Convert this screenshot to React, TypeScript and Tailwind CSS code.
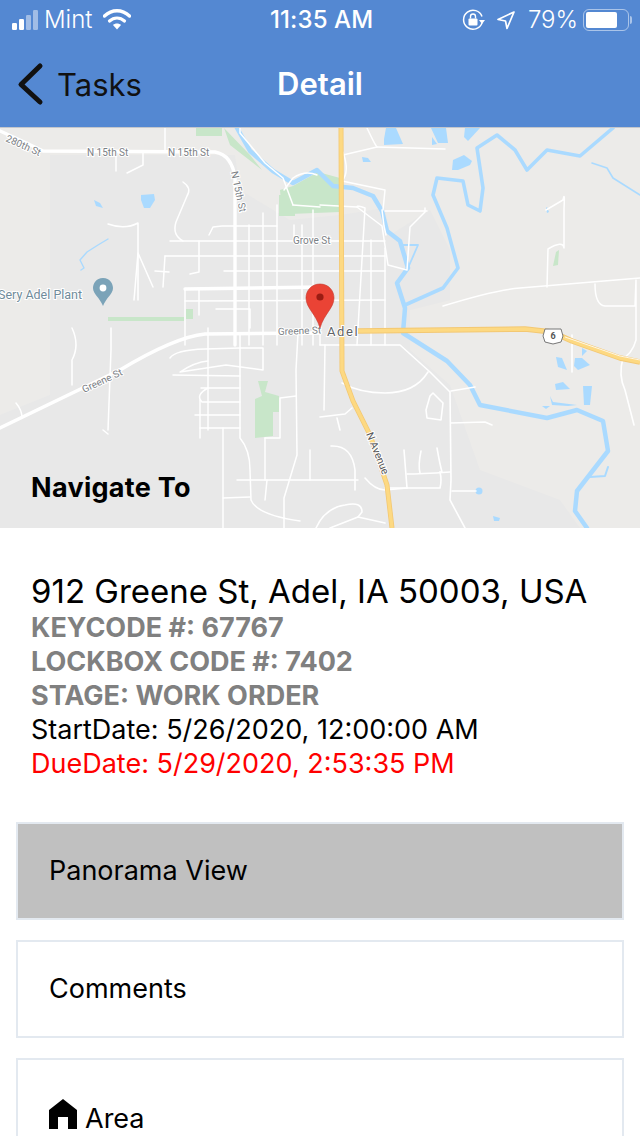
import React from "react";

const white = "#ffffff";
const water = "#aadaff";
const yellow = "#fdd982";
const green = "#c8e6c9";

function Roads() {
  const thick = [
    "M0 131 L22 141 L43 151 L215 152 Q232 155 235 178 L235 345",
    "M0 428 L120 370 Q175 337 205 334 L320 333",
    "M185 289 L320 287",
  ];
  const thin = [
    "M165 128 L165 152", "M116 152 L116 171", "M143 152 L143 165 L127 173",
    "M183 182 Q192 188 187 196 L176 222 Q172 235 183 241",
    "M108 224 Q125 230 138 223 L138 300", "M134 300 L138 253 L153 287",
    "M170 241 L385 241", "M199 241 L199 272 L190 274", "M165 256 L385 256", "M163 287 L165 256",
    "M155 271 L169 272", "M224 271 L385 271", "M185 301 L385 300", "M185 289 L185 345", "M199 289 L199 315", "M216 309 L250 309 L250 328",
    "M249 225 L249 345", "M263 213 L263 345", "M277 205 L277 345", "M302 225 L302 345", "M313 210 L313 345",
    "M357 207 Q357 205 365 208 L357 345", "M371 240 L371 345", "M385 248 L385 345", "M209 235 L213 227 L222 226 L277 226",
    "M294 225 L294 240",
    "M240 128 L240 133 L265 163 L283 178 L293 205", "M284 190 L293 178 Q305 170 317 175", "M293 205 L320 207",
    "M320 205 L357 207 L382 226 L388 265 L407 270 L410 227 L425 212 L425 208",
    "M382 210 L384 226 L386 235", "M385 211 L427 211",
    "M367 128 Q375 145 377 147 L343 155", "M377 147 L445 149", "M343 152 Q350 172 342 181 L385 190 L383 210",
    "M443 306 Q495 290 520 288 L640 278", "M546 210 L563 200 Q565 190 564 209 L564 248 Q563 240 548 249 L547 287",
    "M595 284 Q595 305 605 306 L635 306 L636 280 L636 340 Q632 355 620 360",
    "M72 328 Q80 345 72 360 L72 385", "M111 328 L111 350 L108 430", "M103 430 L108 434",
    "M208 328 L208 430", "M170 358 Q175 350 205 349 L240 348", "M240 348 L263 348 L263 370 L226 365 L180 372 Q195 362 208 361",
    "M173 375 L240 376", "M201 388 L240 388", "M208 388 Q195 395 202 402 L240 402", "M195 415 L240 415", "M200 428 L240 428",
    "M223 428 L223 528", "M200 438 L200 400", "M240 333 L240 438 Q250 450 250 470 L251 500 Q257 515 300 521",
    "M223 498 L250 497", "M265 438 L280 438 L280 398 L296 396", "M265 438 L265 480", "M237 480 L358 480",
    "M298 333 L296 370 L297 455 L284 498 L284 528", "M310 450 L310 480", "M267 480 L265 500", "M320 330 L320 345", "M325 345 L324 410",
    "M16 403 Q22 410 22 418",
  ];
  const mid = [
    "M320 345 L400 345 L430 372 L450 392 L451 480 L450 500 L465 528",
    "M342 383 Q360 393 385 393 Q415 393 428 372",
    "M320 417 L345 414 L352 408 M337 418 L340 430",
    "M331 446 Q352 445 355 470 L355 490", "M404 450 L407 488", "M421 451 Q418 465 420 473", "M437 448 Q440 465 442 472 L440 472",
    "M407 474 Q420 474 450 472", "M407 488 L385 490 Q375 490 365 478", "M385 488 L440 488 Q442 480 440 472",
    "M451 391 L475 387 M451 423 L485 422 L492 425", "M452 491 L476 491",
    "M430 396 L433 393 L443 403 L441 420 L427 418 L426 410 Z",
    "M316 528 Q325 508 345 505 Q362 501 362 512 L358 517 L385 523", "M330 528 L358 517",
    "M623 358 Q618 375 625 390 L634 425",
    "M572 335 L572 372",
  ];
  return (
    <g fill="none" strokeLinecap="round" strokeLinejoin="round" stroke={white}>
      {thick.map((d, i) => <path key={i} d={d} strokeWidth="3.4" />)}
      {thin.map((d, i) => <path key={i} d={d} strokeWidth="1.5" />)}
      {mid.map((d, i) => <path key={i} d={d} strokeWidth="1.6" />)}
    </g>
  );
}

function MapArt() {
  return (
    <svg viewBox="0 128 640 400" className="block w-full h-full" xmlns="http://www.w3.org/2000/svg" style={{ fontFamily: "Roboto, sans-serif" }}>
      <rect x="0" y="128" width="640" height="400" fill="#ecebe9" />
      {/* Town land */}
      <path d="M50 155 L235 155 L240 190 L290 220 L340 215 L385 208 L390 235 L430 210 L450 250 L450 300 L410 310 L410 350 L450 385 L480 470 L560 500 L580 528 L0 528 L0 415 L50 395 Z" fill="#e8e8e8" />
      {/* Parks */}
      <path d="M196 128 L222 128 L222 136 L196 136 Z M224 128 L230 145 L262 170 L250 155 Z" fill={green} />
      <path d="M280 190 L293 186 L318 172 L340 178 L340 212 L290 214 Q280 205 280 190 Z" fill={green} />
      <rect x="279" y="195" width="16" height="21" fill={green} />
      <rect x="108" y="317" width="76" height="4" fill={green} />
      <rect x="186" y="309" width="7" height="10" fill={green} />
      <path d="M258 381 L268 381 L265 392 L279 396 L279 412 L273 412 L273 436 L255 438 L255 399 L262 396 Z" fill={green} />
      <path d="M556 252 L559 250 L558 265 L553 266 Z" fill={green} />
      {/* Water */}
      <g fill="none" stroke={water} strokeLinecap="round" strokeLinejoin="round">
        <path d="M237 128 L250 151 L273 171 L293 183 L317 170 L333 186 L353 188 L373 196 L382 211 L387 231 L400 241 L408 268 L397 283 L405 308 L403 333 L447 361 L470 385 L480 405 L547 418 L577 410 L603 421 L608 451 L577 491 L575 511 L587 528" strokeWidth="4.5" />
        <path d="M405 305 L443 288 L458 268 L447 228 L433 195 L437 178 L463 181 L468 205 L480 211 L483 188 L477 148 L497 135 L515 150 L527 170 L547 150 L580 156 L613 128" strokeWidth="3.6" />
        <path d="M400 245 L418 245 L408 268" strokeWidth="1.8" />
        <path d="M592 163 L607 168 L613 178 L640 195" strokeWidth="1.6" />
        <path d="M108 239 L98 245 L87 252 L80 260 L84 268 L81 270" strokeWidth="1.4" />
        <path d="M590 477 L605 476 L608 467" strokeWidth="2" />
      </g>
      <g fill={water}>
        <path d="M141 195 L154 194 L155 200 L150 208 L144 208 L141 200 Z" />
        <path d="M94 200 L100 203 L103 208 L96 206 Z" />
        <path d="M386 128 L396 128 L403 144 L384 145 L384 139 Z" />
        <path d="M431 128 L446 128 L448 143 L438 143 Z" />
        <path d="M432 137 L437 144 L432 145 Z" />
        <path d="M465 128 L480 128 L468 141 L464 137 Z" />
        <path d="M362 157 L368 158 L371 162 L363 162 Z" />
        <path d="M453 160 L464 155 L472 161 L470 165 L458 170 L452 170 Z" />
        <path d="M546 208 L547 207 L549 212 L547 213 Z" />
        <circle cx="479" cy="491" r="3.5" />
        <path d="M493 516 L500 518 L499 521 L494 521 Z" />
        <path d="M556 357 L562 358 L567 370 L558 367 Z" />
        <path d="M575 358 L582 358 L590 365 L578 370 L574 366 Z" />
        <path d="M582 348 L587 351 L582 356 Z" />
        <path d="M555 384 L563 382 L570 389 L556 390 Z" />
        <path d="M583 386 L592 386 L590 405 L584 405 Z" />
        <path d="M550 396 L553 402 L577 405 L568 406 L552 405 Z" />
        <path d="M542 406 L550 406 L546 409 Z" />
      </g>
      <Roads />
      {/* Highways */}
      <g fill="none" strokeLinecap="butt" strokeLinejoin="round">
        <path d="M341 128 L342 371 L353 401 L370 435 L387 485 L392 528" stroke="#f3c873" strokeWidth="5" />
        <path d="M341 128 L342 371 L353 401 L370 435 L387 485 L392 528" stroke={yellow} strokeWidth="3.4" />
        <path d="M358 331 L525 329 L552 332 L572 341 L620 358 L640 362" stroke="#f3c873" strokeWidth="5.5" />
        <path d="M358 331 L525 329 L552 332 L572 341 L620 358 L640 362" stroke={yellow} strokeWidth="3.6" />
        <path d="M565 337 L620 356 L640 360" stroke={white} strokeWidth="0.8" />
      </g>
      {/* Shield */}
      <path d="M545 329 L561 329 L563 336 L561 342 L553 344 L545 342 L543 336 Z" fill="#fff" stroke="#777" strokeWidth="1" />
      <text x="553" y="339" fontSize="9" fontWeight="700" fill="#555" textAnchor="middle">6</text>
      {/* POI */}
      <path d="M103 278 C96 278 93 284 93 288 C93 294 100 298 103 306 C106 298 113 294 113 288 C113 284 110 278 103 278 Z" fill="#7ba3b8" />
      <circle cx="103" cy="288" r="3.4" fill="#fff" />
      {/* Labels */}
      <g fill="#7c8186" stroke="#fff" strokeWidth="2" paintOrder="stroke" fontSize="10">
        <text x="5" y="141" transform="rotate(24 5 141)" fontSize="10">280th St</text>
        <text x="87" y="156">N 15th St</text>
        <text x="168" y="156">N 15th St</text>
        <text x="231" y="172" transform="rotate(78 231 172)">N 15th St</text>
        <text x="293" y="244">Grove St</text>
        <text x="84" y="393" transform="rotate(-25 84 393)">Greene St</text>
        <text x="278" y="335" transform="rotate(-2 278 335)">Greene St</text>
      </g>
      <text x="-2" y="299" fontSize="12.5" fill="#6f8b9a" stroke="#fff" strokeWidth="2" paintOrder="stroke">Sery Adel Plant</text>
      <text x="327" y="336" fontSize="13" letterSpacing="1.6" fill="#5f6368" stroke="#fff" strokeWidth="2" paintOrder="stroke">Adel</text>
      <text x="366" y="434" fontSize="10.5" fill="#555" stroke="#fff" strokeWidth="2" paintOrder="stroke" transform="rotate(68 366 434)">N Avenue</text>
      {/* Pin */}
      <path d="M320 284 C311 284 306 291 306 298 C306 308 316 314 320 328 C324 314 334 308 334 298 C334 291 329 284 320 284 Z" fill="#ea4335" stroke="#c5352a" strokeWidth="0.6" />
      <circle cx="320" cy="297" r="3.6" fill="#9b1c13" />
    </svg>
  );
}

function StatusBar() {
  return (
    <div className="h-10 relative flex items-center text-white text-[24px] leading-none" >
      <div className="flex items-center pl-3 flex-1">
        <svg width="26" height="20" viewBox="0 0 26 20" className="mr-[6px]">
          <rect x="0" y="13" width="5" height="7" rx="1.2" fill="#fff" />
          <rect x="7" y="9" width="5" height="11" rx="1.2" fill="#fff" />
          <rect x="14" y="5" width="5" height="15" rx="1.2" fill="#ffffff" fillOpacity="0.45" />
          <rect x="21" y="0" width="5" height="20" rx="1.2" fill="#ffffff" fillOpacity="0.45" />
        </svg>
        <span className="font-light">Mint</span>
        <svg width="28" height="21" viewBox="0 0 28 21" className="ml-[10px] mb-[2px]">
          <path d="M1.5 7 C9 0 19 0 26.5 7" fill="none" stroke="#fff" strokeWidth="3.4" strokeLinecap="round" />
          <path d="M6.5 12 C11 8 17 8 21.5 12" fill="none" stroke="#fff" strokeWidth="3.2" strokeLinecap="round" />
          <path d="M10 16 C12 14 16 14 18 16 L14 20.5 Z" fill="#fff" />
        </svg>
      </div>
      <span className="absolute left-[270px] top-[8px] font-medium tracking-[0.1px]">11:35 AM</span>
      <div className="flex items-center pr-2 text-[24px] font-light">
        <svg width="24" height="22" viewBox="0 0 24 22" className="mr-[10px]">
          <path d="M20 14 A9.5 9.5 0 1 1 20 7.5" fill="none" stroke="#fff" strokeWidth="1.5" />
          <path d="M17 11 L23 11 L20 15 Z" fill="#fff" />
          <rect x="6.5" y="9.5" width="9" height="7" rx="1" fill="#fff" />
          <path d="M8.5 9.5 V7.5 A2.5 2.5 0 0 1 13.5 7.5 V9.5" fill="none" stroke="#fff" strokeWidth="1.4" />
        </svg>
        <svg width="20" height="20" viewBox="0 0 20 20" className="mr-[12px]">
          <path d="M18 2 L2 9.5 L9.5 11 L11 18.5 Z" fill="none" stroke="#fff" strokeWidth="1.7" strokeLinejoin="round" />
        </svg>
        <span>79%</span>
        <div className="ml-[5px] w-[46px] h-[22px] rounded-[6px] border-[1.5px] border-white/50 p-[2px]">
          <div className="h-full w-[78%] bg-white rounded-[2px]" />
        </div>
        <div className="ml-[1px] w-[2px] h-[8px] bg-white/50 rounded-r-sm" />
      </div>
    </div>
  );
}

function Card({ gray, children }: { gray?: boolean; children: React.ReactNode }) {
  return (
    <div className={`mx-4 h-[98px] shrink-0 border-[2px] border-[#e3e9f0] pl-[31px] flex items-center text-[27px] text-black ${gray ? "bg-[#c0c0c0]" : "bg-white"}`}>
      {children}
    </div>
  );
}

export default function App() {
  return (
    <div className="w-[640px] h-[1136px] overflow-hidden bg-white flex flex-col" style={{ fontFamily: "Inter, 'Liberation Sans', sans-serif" }}>
      <header className="h-[128px] shrink-0 bg-[#5488d2] border-b border-[#c4c7cc]">
        <StatusBar />
        <div className="relative h-[87px] flex items-center justify-center">
          <div className="absolute left-[16px] top-[22px] flex items-center">
            <svg width="28" height="44" viewBox="0 0 28 44">
              <path d="M24 4 L5 22.5 L24 40" fill="none" stroke="#111" strokeWidth="5" strokeLinecap="round" strokeLinejoin="round" />
            </svg>
            <span className="ml-[13px] text-[31px] text-[#111] leading-none">Tasks</span>
          </div>
          <span className="text-[31px] font-semibold text-white leading-none mb-[1px]">Detail</span>
        </div>
      </header>
      <div className="relative h-[400px] shrink-0">
        <MapArt />
        <span className="absolute left-[31px] top-[346px] text-[27px] font-bold text-black leading-none tracking-[0.3px]">Navigate To</span>
      </div>
      <div className="pl-[31px] pt-[43px] pb-[41px] shrink-0">
        <div className="text-[33px] leading-[40px] text-black">912 Greene St, Adel, IA 50003, USA</div>
        <div className="text-[27px] leading-[34px] font-bold text-[#808080]">KEYCODE #: 67767</div>
        <div className="text-[27px] leading-[34px] font-bold text-[#808080]">LOCKBOX CODE #: 7402</div>
        <div className="text-[27px] leading-[34px] font-bold text-[#808080]">STAGE: WORK ORDER</div>
        <div className="text-[27px] leading-[34px] text-black">StartDate: 5/26/2020, 12:00:00 AM</div>
        <div className="text-[27px] leading-[34px] text-[#ff0000]">DueDate: 5/29/2020, 2:53:35 PM</div>
      </div>
      <div className="flex flex-col gap-[20px]">
        <Card gray>Panorama View</Card>
        <Card>Comments</Card>
        <Card>
          <div className="flex items-end mt-[16px]">
            <svg width="28" height="32" viewBox="0 0 28 32" className="mb-[2px]">
              <path d="M14 1 L28 12 V31 H19 V19 H9 V31 H0 V12 Z" fill="#000" />
            </svg>
            <span className="ml-[8px] leading-none">Area</span>
          </div>
        </Card>
      </div>
    </div>
  );
}
